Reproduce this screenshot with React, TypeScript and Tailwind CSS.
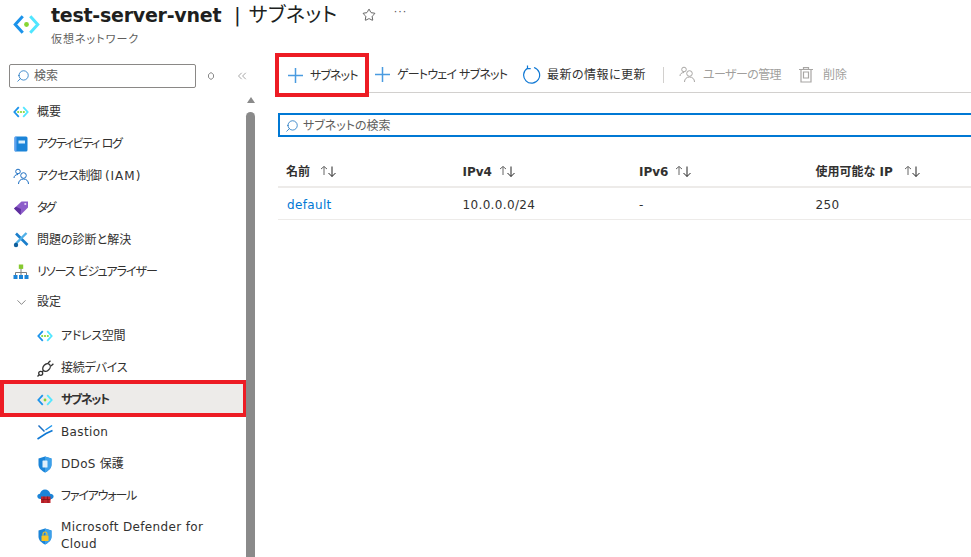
import React from 'react';
import { ChevronDown, ChevronsLeft, Star, Search } from 'lucide-react';

const font = { fontFamily: '"DejaVu Sans", "Noto Sans CJK JP", sans-serif' };

const VnetIcon = ({ size = 14, dots = 1 }: { size?: number; dots?: number }) => (
  <svg width={size} height={size} viewBox="0 0 18 18" fill="none">
    <path d="M6.5 3.5 1.5 9l5 5.5" stroke="#1b93eb" strokeWidth="2" />
    <path d="M11.5 3.5 16.5 9l-5 5.5" stroke="#50e6ff" strokeWidth="2" />
    {dots === 1 ? (
      <circle cx="9" cy="9" r="1.6" fill="#86d633" />
    ) : (
      <>
        <circle cx="5.8" cy="9" r="1.2" fill="#86d633" />
        <circle cx="9" cy="9" r="1.2" fill="#86d633" />
        <circle cx="12.2" cy="9" r="1.2" fill="#86d633" />
      </>
    )}
  </svg>
);

const BookIcon = () => (
  <svg width="16" height="16" viewBox="0 0 16 16">
    <rect x="1.5" y="0.5" width="13" height="15" rx="1.5" fill="#1b84d8" />
    <rect x="1.5" y="0.5" width="2" height="15" rx="1" fill="#5ea0ef" />
    <rect x="5.5" y="4.5" width="6.5" height="3" fill="#d8eefc" />
  </svg>
);

const UsersIcon = ({ color = '#1b6ec2', size = 17 }: { color?: string; size?: number }) => (
  <svg width={size} height={size} viewBox="0 0 17 17" fill="none" stroke={color} strokeWidth="1">
    <circle cx="5" cy="3.5" r="2.3" />
    <path d="M1 10c0-2 1.5-3.5 4-3.5" />
    <circle cx="10.5" cy="7.5" r="2.8" />
    <path d="M5.5 16c0-3 2-5 5-5s5 2 5 5" />
  </svg>
);

const TagIcon = () => (
  <svg width="16" height="16" viewBox="0 0 16 16">
    <path d="M1 8.5 8.5 1.5 15 1.5V7.5L7.5 15Z" fill="#8c5cc9" />
    <path d="M1 8.5 7.5 15 8 9 3 6.7Z" fill="#5e2f9e" />
    <circle cx="12.3" cy="4" r="1.1" fill="#e6d8f5" />
  </svg>
);

const ToolsIcon = () => (
  <svg width="16" height="16" viewBox="0 0 16 16" fill="none">
    <path d="M3 1.5 14.5 13" stroke="#1b7fcc" strokeWidth="2.6" />
    <path d="M13.5 1 3 11.5" stroke="#50b0e8" strokeWidth="2.4" />
    <circle cx="3" cy="13" r="2.2" fill="#0f5f9c" />
  </svg>
);

const TreeIcon = () => (
  <svg width="16" height="16" viewBox="0 0 16 16" fill="none">
    <path d="M8 4v8M2.5 12V8.5h11V12" stroke="#7f7f7f" strokeWidth="1" />
    <rect x="5.8" y="0.5" width="4.4" height="4.4" fill="#86c92f" />
    <rect x="0.5" y="11" width="4" height="4" fill="#1b84d8" />
    <rect x="6" y="11" width="4" height="4" fill="#1b84d8" />
    <rect x="11.5" y="11" width="4" height="4" fill="#1b84d8" />
  </svg>
);

const PlugIcon = () => (
  <svg width="17" height="17" viewBox="0 0 17 17" fill="none" stroke="#333" strokeWidth="1.3">
    <ellipse cx="9.5" cy="7.5" rx="3.2" ry="4.3" transform="rotate(45 9.5 7.5)" />
    <path d="M6.5 10.5 5 12M11 3 13.5.8M14 6 16.4 3.7" />
    <circle cx="3.7" cy="13.3" r="2" />
    <path d="M2.2 14.8 .5 16.5" />
  </svg>
);

const BastionIcon = () => (
  <svg width="16" height="16" viewBox="0 0 16 16" fill="none">
    <path d="M1.5 1.5 7.5 7.5" stroke="#1b6ec2" strokeWidth="1.5" />
    <path d="M.5 15 9 9.5 15.5 6.5" stroke="#0f78d4" strokeWidth="1.6" />
    <path d="M15 1.5 8.5 6" stroke="#1b93eb" strokeWidth="1.5" />
  </svg>
);

const ShieldIcon = ({ lock }: { lock?: boolean }) => (
  <svg width="16" height="17" viewBox="0 0 16 17">
    <path d="M8 .5 14.5 2.5V8.5C14.5 12.5 11 15 8 16.5 5 15 1.5 12.5 1.5 8.5V2.5Z" fill="#1b84d8" />
    <path d="M8 .5 14.5 2.5V8.5C14.5 12.5 11 15 8 16.5Z" fill="#3ca0ea" />
    {lock ? (
      <>
        <rect x="4.5" y="7.5" width="7" height="5.5" rx=".6" fill="#f7c325" />
        <path d="M6 7.5V6a2 2 0 0 1 4 0v1.5" fill="none" stroke="#f7c325" strokeWidth="1.1" />
      </>
    ) : (
      <rect x="5.5" y="4.5" width="5" height="7" rx=".6" fill="#dff0fb" />
    )}
  </svg>
);

const FirewallIcon = () => (
  <svg width="17" height="16" viewBox="0 0 17 16">
    <path d="M3.5 11C1.5 11 .3 9.6.3 8.2.3 6.8 1.5 5.7 3 5.7 3.5 3.3 5.5 1.5 8 1.5c2.6 0 4.7 1.8 5.2 4.2 1.8 0 3.4 1.1 3.4 2.7 0 1.5-1.3 2.6-3.1 2.6Z" fill="#1b84d8" />
    <rect x="4" y="8.5" width="9.5" height="6.5" fill="#c4262e" />
    <path d="M4 11.5h9.5M7 8.5v3M10.5 8.5v3M6 11.5v3.5M11 11.5v3.5" stroke="#7c1218" strokeWidth=".7" />
  </svg>
);

const PlusIcon = () => (
  <svg width="17" height="17" viewBox="0 0 17 17" fill="none" stroke="#4a9be0" strokeWidth="1.5" className="shrink-0">
    <path d="M8.5 1v15M1 8.5h15" />
  </svg>
);

const RefreshIcon = () => (
  <svg width="18" height="19" viewBox="0 0 18 19" fill="none" stroke="#0f78d4" strokeWidth="1.2">
    <path d="M11 2.5a8 8 0 1 1-6.5.8" />
    <path d="M4.5 .5v3.2h3.2" />
  </svg>
);

const TrashIcon = () => (
  <svg width="14" height="16" viewBox="0 0 14 16" fill="none" stroke="#a8a6a4" strokeWidth="1.2">
    <path d="M2 2.5h10V15H2ZM0 2.5h14M4.5 2.5V.7h5v1.8" />
    <path d="M4.5 5h5v6h-5Z" />
  </svg>
);

const SortArrows = () => (
  <svg width="18" height="13" viewBox="0 0 18 13" fill="none" stroke="#666" strokeWidth="1">
    <path d="M5 10V1.5M2 4l3-2.5L8 4" />
    <path d="M13 1.5V11.5M9.5 8l3.5 3.5L16.5 8" stroke="#222" />
  </svg>
);

const Latin = ({ children }: { children: React.ReactNode }) => (
  <span className="tracking-[0.35px]">{children}</span>
);

const navTop = [
  { icon: <VnetIcon size={16} dots={3} />, label: <>概要</>, key: 'overview' },
  { icon: <BookIcon />, label: <span className="tracking-[-1.3px]">アクティビティ ログ</span>, key: 'log' },
  {
    icon: <UsersIcon />,
    label: (
      <>
        <span className="tracking-[-0.5px]">アクセス制御 </span>
        <span className="tracking-[1px]">(IAM)</span>
      </>
    ),
    key: 'iam',
  },
  { icon: <TagIcon />, label: <span className="tracking-[-2px]">タグ</span>, key: 'tag' },
  { icon: <ToolsIcon />, label: <>問題の診断と解決</>, key: 'diag' },
  { icon: <TreeIcon />, label: <span className="tracking-[-1px]">リソース ビジュアライザー</span>, key: 'visual' },
];

const columns = [
  { label: '名前', gap: 'ml-[9px]' },
  { label: 'IPv4', gap: 'ml-[6px]' },
  { label: 'IPv6', gap: 'ml-[6px]' },
  { label: '使用可能な IP', gap: 'ml-[10px]' },
];

export default function App() {
  return (
    <div
      className="flex h-[557px] w-[971px] flex-col overflow-hidden bg-white text-[#323130] [font-feature-settings:'palt']"
      style={font}
    >
      {/* Header */}
      <header className="flex h-[53px] shrink-0 items-start pl-[13px]">
        <div className="mt-[11px] w-[38px] shrink-0">
          <VnetIcon size={27} />
        </div>
        <div className="min-w-0">
          <div className="flex h-[30px] items-center whitespace-nowrap text-[#201f1e]">
            <span className="w-[171px] text-[19px] font-semibold tracking-[-0.25px]">test-server-vnet</span>
            <span className="ml-[12px] text-[20px]">|</span>
            <span className="ml-[8px] w-[90px] text-[20px] tracking-[0.4px]">サブネット</span>
            <Star size={14} strokeWidth={1.3} className="ml-[23px] text-[#333]" />
            <span className="mb-[6px] ml-[18px] text-[11px] tracking-[1px] text-[#555]">···</span>
          </div>
          <div className="mt-[2px] text-[11px] leading-[16px] tracking-[1px] text-[#605e5c]">仮想ネットワーク</div>
        </div>
      </header>

      <div className="flex min-h-0 flex-1">
        {/* Sidebar */}
        <aside className="flex w-[255px] shrink-0">
          <div className="flex w-[246px] flex-col text-[12px]">
            <div className="flex h-[38px] shrink-0 items-center pl-[9px] pt-[7px]">
              <div className="flex h-[24px] w-[187px] shrink-0 items-center rounded-[2px] border border-[#8a8886] pl-[6px]">
                <Search size={14} strokeWidth={1.3} className="-scale-x-100 text-[#0f6cbd]" />
                <span className="ml-[4px] text-[#605e5c]">検索</span>
              </div>
              <svg width="10" height="10" viewBox="0 0 10 10" className="ml-[10px] shrink-0" fill="none" stroke="#888">
                <path d="M5 1.5 7.5 3.5V6.5L5 8.5 2.5 6.5V3.5Z" />
              </svg>
              <ChevronsLeft size={14} strokeWidth={1} className="ml-[19px] shrink-0 text-[#666]" />
            </div>
            <nav className="flex flex-col pt-[5px]">
              {navTop.map((item) => (
                <div key={item.key} className="flex h-[32px] items-center pl-[13px]">
                  <span className="flex w-[24px] shrink-0">{item.icon}</span>
                  <span className="whitespace-nowrap">{item.label}</span>
                </div>
              ))}
              <div className="flex h-[28px] items-center pl-[14px]">
                <ChevronDown size={15} strokeWidth={1} className="mr-[8px] shrink-0 text-[#444]" />
                <span>設定</span>
              </div>
              <div className="mt-[4px] flex h-[32px] items-center pl-[37px]">
                <span className="flex w-[24px] shrink-0"><VnetIcon size={16} dots={3} /></span>
                <span className="tracking-[-0.3px]">アドレス空間</span>
              </div>
              <div className="flex h-[32px] items-center pl-[37px]">
                <span className="flex w-[24px] shrink-0"><PlugIcon /></span>
                <span className="tracking-[-0.2px]">接続デバイス</span>
              </div>
              <div className="-mt-[4px] flex h-[37px] w-[247px] items-center border-4 border-[#ed1c24] bg-[#edebe9] pl-[33px] pt-[2px] font-bold">
                <span className="flex w-[24px] shrink-0"><VnetIcon size={16} /></span>
                <span className="tracking-[-1.4px]">サブネット</span>
              </div>
              <div className="-mt-[1px] flex h-[32px] items-center pl-[37px]">
                <span className="flex w-[24px] shrink-0"><BastionIcon /></span>
                <Latin>Bastion</Latin>
              </div>
              <div className="flex h-[32px] items-center pl-[37px]">
                <span className="flex w-[24px] shrink-0"><ShieldIcon /></span>
                <span><Latin>DDoS</Latin> 保護</span>
              </div>
              <div className="flex h-[32px] items-center pl-[37px]">
                <span className="flex w-[24px] shrink-0"><FirewallIcon /></span>
                <span className="tracking-[-1.2px]">ファイアウォール</span>
              </div>
              <div className="flex items-center pl-[37px] pt-[7px] leading-[17px]">
                <span className="flex w-[24px] shrink-0"><ShieldIcon lock /></span>
                <span className="w-[155px]"><Latin>Microsoft Defender for Cloud</Latin></span>
              </div>
            </nav>
          </div>
          {/* Scrollbar */}
          <div className="flex w-[9px] flex-col items-center pt-[44px]">
            <div className="h-0 w-0 border-x-[4.5px] border-b-[6px] border-x-transparent border-b-[#8a8a8a]" />
            <div className="mt-[9px] w-full flex-1 rounded-t-full bg-[#8a8a8a]" />
          </div>
        </aside>

        {/* Main */}
        <main className="min-w-0 flex-1 pl-[20px] text-[12px]">
          <div className="flex h-[44px] items-start whitespace-nowrap">
            <div className="flex h-[44px] w-[94px] shrink-0 items-center border-4 border-[#ed1c24] pl-[8px]">
              <PlusIcon />
              <span className="ml-[6px] pt-[1px] tracking-[-0.9px]">サブネット</span>
            </div>
            <div className="flex h-[40px] flex-1 items-center border-b border-[#d2d0ce] pl-[5px] pt-[4px]">
              <PlusIcon />
              <span className="ml-[6px] w-[111px] pt-[1px] tracking-[-0.8px]">ゲートウェイ サブネット</span>
              <span className="ml-[15px] shrink-0"><RefreshIcon /></span>
              <span className="ml-[6px] w-[100px] pt-[1px] tracking-[0.5px]">最新の情報に更新</span>
              <div className="ml-[16px] h-[16px] w-px shrink-0 bg-[#d2d0ce]" />
              <span className="ml-[15px] shrink-0"><UsersIcon color="#a8a6a4" /></span>
              <span className="ml-[7px] w-[80px] pt-[1px] tracking-[-0.6px] text-[#a19f9d]">ユーザーの管理</span>
              <span className="ml-[16px] shrink-0"><TrashIcon /></span>
              <span className="ml-[10px] pt-[1px] text-[#a19f9d]">削除</span>
            </div>
          </div>

          <div className="ml-[3px] mt-[16px] flex h-[24px] w-[720px] items-center border-2 border-[#0078d4] pl-[5px] pt-[1px]">
            <Search size={14} strokeWidth={1.3} className="-scale-x-100 text-[#0f6cbd]" />
            <span className="ml-[4px] text-[#605e5c]">サブネットの検索</span>
          </div>

          <div className="ml-[3px] mt-[20px] w-[693px]">
            <div className="grid h-[31px] grid-cols-[176.5px_176.5px_176.5px_1fr] items-center border-b-2 border-[#edebe9] font-bold">
              {columns.map((col) => (
                <div key={col.label} className="flex items-center pl-[8px]">
                  <span>{col.label}</span>
                  <span className={col.gap}><SortArrows /></span>
                </div>
              ))}
            </div>
            <div className="grid h-[32px] grid-cols-[176.5px_176.5px_176.5px_1fr] items-center border-b border-[#edebe9] pt-[3px] tracking-[0.35px]">
              <span className="pl-[9px] text-[#0078d4]">default</span>
              <span className="pl-[8px]">10.0.0.0/24</span>
              <span className="pl-[8px]">-</span>
              <span className="pl-[8px]">250</span>
            </div>
          </div>
        </main>
      </div>
    </div>
  );
}
